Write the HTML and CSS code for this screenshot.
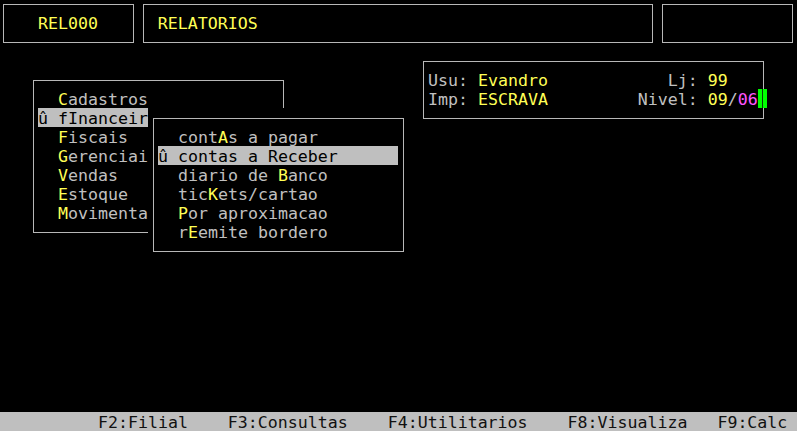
FILE: index.html
```html
<!DOCTYPE html>
<html lang="pt">
<head>
  <meta charset="UTF-8" />
  <meta name="viewport" content="width=device-width, initial-scale=1.0"/>
  <title>REL000 - Relatorios</title>
  <link rel="stylesheet" href="styles.css">
</head>
<body>
  <div class="screen">

    <!-- Top header boxes -->
    <div class="topbar">
      <div class="cell-box box-code">
        <div class="frame"><div class="line hk">REL000</div></div>
      </div>
      <div class="cell-box box-title">
        <div class="frame"><div class="line hk">RELATORIOS</div></div>
      </div>
      <div class="cell-box box-extra">
        <div class="frame"><div class="line"> </div></div>
      </div>
    </div>

    <!-- User info window -->
    <div class="win win-info">
      <div class="frame">
        <div class="line">Usu: <span class="hk">Evandro</span>            Lj: <span class="hk">99</span></div>
        <div class="line">Imp: <span class="hk">ESCRAVA</span>         Nivel: <span class="hk">09</span>/<span class="mag">06</span></div>
      </div>
      <span class="cursor"></span>
    </div>

    <!-- Main menu -->
    <div class="win win-menu">
      <div class="frame">
        <div class="line">  <span class="hk">C</span>adastros</div>
        <div class="line sel">û fInanceiro</div>
        <div class="line">  <span class="hk">F</span>iscais</div>
        <div class="line">  <span class="hk">G</span>erenciais</div>
        <div class="line">  <span class="hk">V</span>endas</div>
        <div class="line">  <span class="hk">E</span>stoque</div>
        <div class="line">  <span class="hk">M</span>ovimentacao</div>
      </div>
    </div>

    <!-- Financeiro submenu -->
    <div class="win win-sub">
      <div class="frame">
        <div class="line">  cont<span class="hk">A</span>s a pagar</div>
        <div class="line sel">û contas a Receber</div>
        <div class="line">  diario de <span class="hk">B</span>anco</div>
        <div class="line">  tic<span class="hk">K</span>ets/cartao</div>
        <div class="line">  <span class="hk">P</span>or aproximacao</div>
        <div class="line">  r<span class="hk">E</span>emite bordero</div>
      </div>
    </div>

    <!-- Function keys -->
    <div class="keys line">F2:Filial    F3:Consultas    F4:Utilitarios    F8:Visualiza   F9:Calc</div>
  </div>
</body>
</html>
```
FILE: styles.css
```css
html, body {
  margin: 0;
  padding: 0;
  background: #000;
}

.screen {
  width: 797px;
  height: 431px;
  position: relative;
  overflow: hidden;
  background: #000;
  display: flex;
  flex-direction: column;
  font-family: "DejaVu Sans Mono", monospace;
  font-size: 16.6px;
  line-height: 19px;
  color: #c0c0c0;
}

/* one text row of the terminal: 19px cell, glyphs sit 1px low */
.line {
  white-space: pre;
  height: 18px;
  padding-top: 1px;
}

.hk {
  color: #ffff55;
}

.mag {
  color: #ff55ff;
}

/* every box sits on the 10x19 character grid, frame drawn mid-cell */
.cell-box,
.win {
  box-sizing: border-box;
  padding: 10px 4px 8px 5px;
  background: #000;
}

.frame {
  box-sizing: border-box;
  height: 100%;
  border: 1px solid #b8b8b8;
  padding: 8px 5px 10px 4px;
}

.topbar {
  display: flex;
  margin: -6px 0 0 -2px;
}

.topbar .cell-box {
  height: 57px;
}

.box-code {
  width: 140px;
}

.box-code .frame {
  padding-left: 34px;
}

.box-title {
  width: 520px;
}

.box-title .frame {
  padding-left: 14px;
}

.box-extra {
  width: 140px;
}

.win {
  position: absolute;
}

.win-info {
  left: 418px;
  top: 51px;
  width: 350px;
  height: 76px;
}

.win-menu {
  left: 28px;
  top: 70px;
  width: 260px;
  height: 171px;
}

.win-sub {
  left: 148px;
  top: 108px;
  width: 260px;
  height: 152px;
}

.sel {
  background: #bfbfbf;
  color: #000;
}

.cursor {
  position: absolute;
  left: 340px;
  top: 38px;
  width: 9px;
  height: 19px;
  background: #00ff00;
}

.cursor::after {
  content: "";
  position: absolute;
  left: 4px;
  top: 0;
  width: 1px;
  height: 19px;
  background: #0a3a0a;
}

.keys {
  margin-top: auto;
  background: #bfbfbf;
  color: #111;
  padding-left: 98px;
}
```
